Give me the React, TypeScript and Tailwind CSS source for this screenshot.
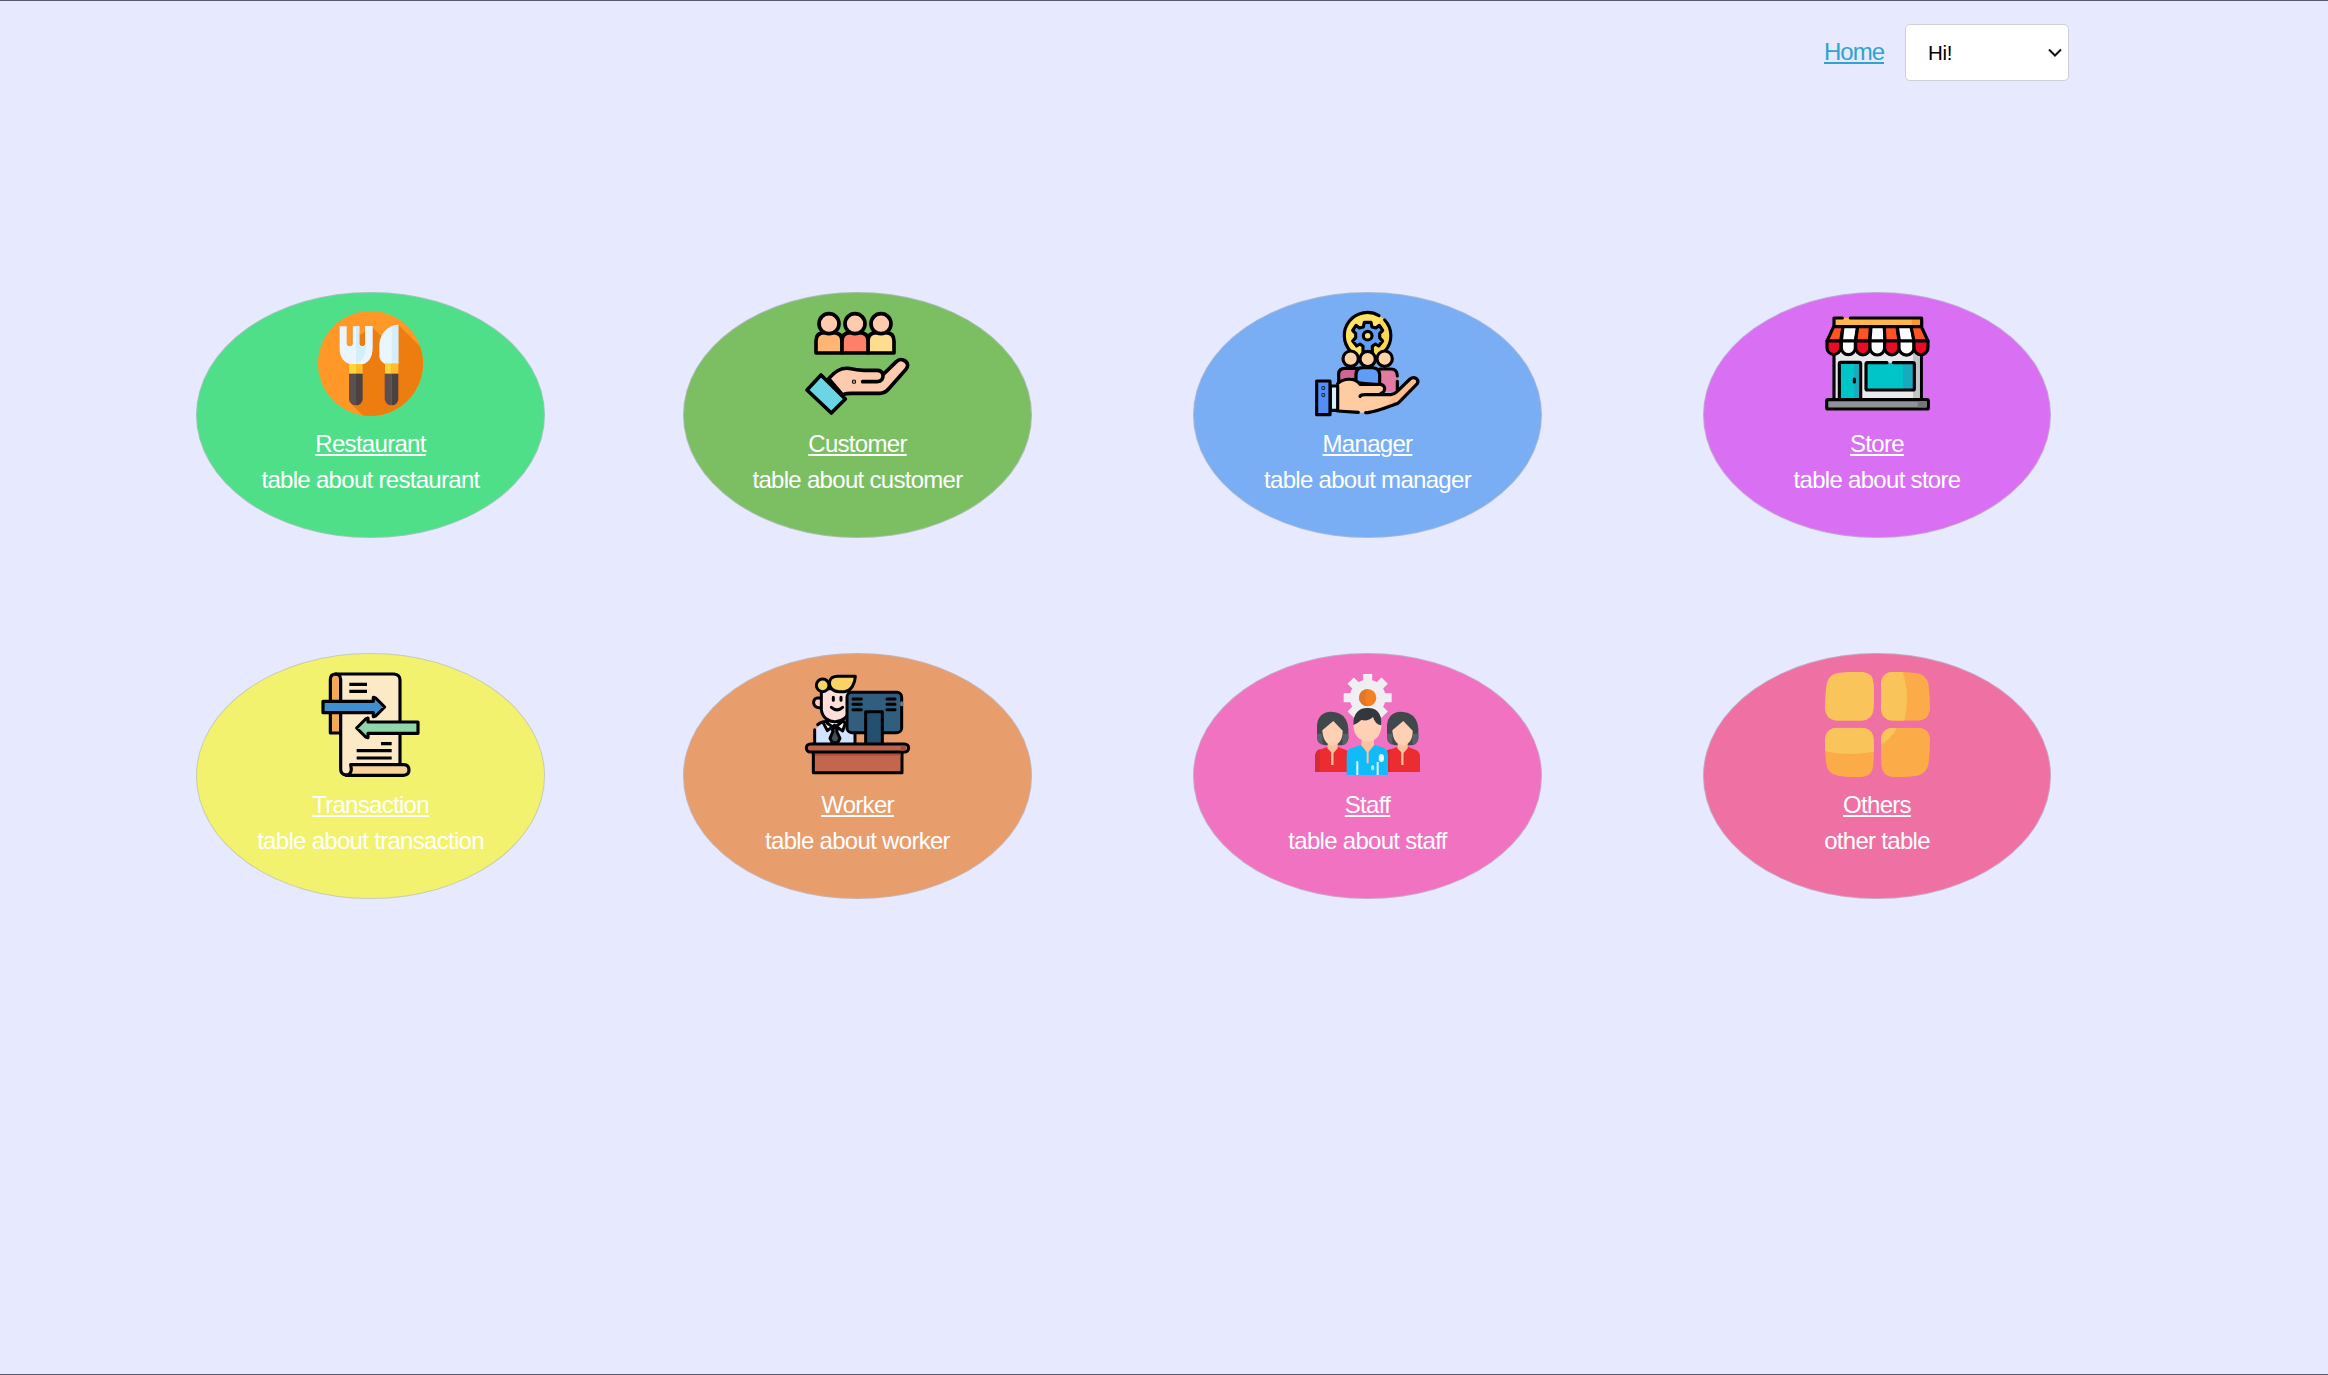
import React from "react";

function RestaurantIcon() {
  return (
    <svg viewBox="384 77 315 315" className="h-[105px] w-[105px]">
      <defs>
        <clipPath id="plate">
          <circle cx="541.5" cy="234.5" r="157.5" />
        </clipPath>
      </defs>
      <circle cx="541.5" cy="234.5" r="157.5" fill="#ff9827" />
      <g clipPath="url(#plate)">
        <path d="M486 123 L512 148 L545 124 L582 160 L625 119 L760 250 L700 440 H568 L478 350 L484 240 Z" fill="#ed7d0e" />
      </g>
      <path d="M449 123H470V174A9 9 0 0 0 488 174V123H508V174A9 9 0 0 0 526 174V123H547V190C547 218 532 236 510 237H485C463 234 449 216 449 190Z" fill="#eaf6ff" />
      <path d="M498 123H508V174A9 9 0 0 0 526 174V123H547V190C547 218 532 236 510 237H498Z" fill="#d3effd" />
      <path d="M526 123H547V190C547 218 532 236 510 237H498C518 228 528 210 528 185Z" fill="#e9f6ff" />
      <rect x="477" y="236" width="21" height="29" fill="#ffd33b" />
      <rect x="498" y="236" width="20" height="29" fill="#ffbd2e" />
      <path d="M477 265H498V360A20 20 0 0 1 477 340Z" fill="#5d4f4f" />
      <path d="M498 265H518V340A20 20 0 0 1 498 360Z" fill="#4b4141" />
      <path d="M625 118V236H585C572 228 568 222 568 210V176C570 145 592 120 625 118Z" fill="#eaf6ff" />
      <path d="M605 124Q614 119 625 118V236H605Z" fill="#d3effd" />
      <rect x="585" y="234" width="20" height="31" fill="#ffd33b" />
      <rect x="605" y="234" width="20" height="31" fill="#ffbd2e" />
      <path d="M584 265H605V360A20 20 0 0 1 584 340Z" fill="#5d4f4f" />
      <path d="M605 265H625V340A20 20 0 0 1 605 360Z" fill="#4b4141" />
    </svg>
  );
}

function CustomerIcon() {
  return (
    <svg viewBox="30 33 315 315" className="h-[105px] w-[105px] overflow-visible" stroke="#000" strokeWidth="11" strokeLinejoin="round" strokeLinecap="round">
      <path d="M63 159V123Q63 98 88 98H115Q141 98 141 123V159Z" fill="#ffb573" />
      <path d="M219 159V123Q219 98 244 98H272Q297 98 297 123V159Z" fill="#ffdc8e" />
      <path d="M141 159V123Q141 98 166 98H194Q219 98 219 123V159Z" fill="#ff8068" />
      <circle cx="102" cy="71" r="30" fill="#ffcbaf" />
      <circle cx="180" cy="71" r="30" fill="#ffcbaf" />
      <circle cx="258" cy="71" r="30" fill="#ffcbaf" />
      <path d="M101 236C121 214 137 203 160 205C178 209 190 211 206 211H246Q261 211 264 224L304 185C316 172 336 181 338 195Q338 202 332 209L280 268Q269 280 254 280H170Q154 280 142 284Z" fill="#ffcbaf" />
      <path d="M203 245H246Q266 244 264 222" fill="none" />
      <circle cx="177" cy="245" r="1.500" fill="#000" strokeWidth="10" />
      <path d="M78 225L151 297L109 339L36 270Z" fill="#6bd5e5" />
    </svg>
  );
}

function ManagerIcon() {
  return (
    <svg viewBox="30 33 315 315" className="h-[105px] w-[105px] overflow-visible" stroke="#000" strokeWidth="9.500" strokeLinejoin="round" strokeLinecap="round">
      <circle cx="188" cy="107" r="69" fill="#ffe366" stroke="none" />
      <path d="M239 60Q266 105 240 152Q215 175 188 176Q226 112 224 50Z" fill="#f7cb45" stroke="none" opacity=".5" />
      <path d="M136 153A69 69 0 0 1 222 47M239 60A69 69 0 0 1 240 153" fill="none" />
      <path d="M178 67H198L201 81L213 84L223 76L233 91L224 101V113L233 123L221 138L211 132L202 139V156H174V139L165 132L155 138L143 123L152 113V101L143 91L153 76L163 84L175 81Z" fill="#5f9df7" />
      <circle cx="188" cy="107" r="13" fill="#ffe366" />
      <path d="M101 245V221Q102 205 120 205H161V255L145 238Z" fill="#cd6695" />
      <path d="M224 274V205H257Q277 206 277 222V274Z" fill="#e27aa1" stroke="none" />
      <path d="M224 207H257Q277 207 277 228M277 244V270" fill="none" />
      <path d="M153 248V223Q154 203 174 203H202Q223 204 224 224V255Z" fill="#5f9df7" />
      <circle cx="137" cy="176" r="23" fill="#ffd3a8" />
      <circle cx="239" cy="176" r="23" fill="#ffd3a8" />
      <circle cx="188" cy="177" r="23" fill="#ffd3a8" />
      <path d="M98 251C118 232 151 234 165 253H225Q239 253 240 268L238 278H270L313 238C325 227 342 236 339 249L287 302Q280 311 267 315L188 339L98 333Z" fill="#ffcba0" stroke="none" />
      <path d="M238 290L270 278L313 238C325 227 342 236 339 249L287 302Q280 311 267 315L240 323L262 292Z" fill="#ffbd8b" stroke="none" />
      <path d="M98 251C118 232 151 234 165 253H225C243 255 243 275 228 280M165 289Q168 284 180 284H257Q269 282 276 275L315 237C327 227 344 237 337 251L287 302Q280 311 267 314Q205 337 182 338M160 337L98 333" fill="none" />
      <rect x="76" y="258" width="22" height="73" fill="#d5f3ff" />
      <rect x="35" y="243" width="40" height="101" fill="#518ef8" />
      <circle cx="55" cy="264" r="1" fill="#000" />
      <circle cx="55" cy="285" r="1" fill="#000" />
    </svg>
  );
}

const AWNING = [
  { top: "M56 80H84L77 123H36Z", bottom: "M36 123H77V143A20 20 0 0 1 36 143Z", hot: true },
  { top: "M84 80H128L121 123H79Z", bottom: "M79 123H121V143A21 21 0 0 1 79 143Z", hot: false },
  { top: "M128 80H166L164 123H122Z", bottom: "M122 123H165V143A21 21 0 0 1 122 143Z", hot: true },
  { top: "M168 80H208L210 123H165Z", bottom: "M165 123H209V143A22 22 0 0 1 165 143Z", hot: false },
  { top: "M208 80H246L252 123H210Z", bottom: "M209 123H252V143A21 21 0 0 1 209 143Z", hot: true },
  { top: "M247 80H290L297 123H253Z", bottom: "M252 123H297V143A22 22 0 0 1 252 143Z", hot: false },
  { top: "M288 80H319L339 123H297Z", bottom: "M297 123H339V143A21 21 0 0 1 297 143Z", hot: true },
];

function StoreIcon() {
  return (
    <svg viewBox="30 33 315 315" className="h-[105px] w-[105px] overflow-visible" stroke="#000" strokeWidth="9.500" strokeLinejoin="round" strokeLinecap="round">
      <path d="M57 145H319V299H57Z" fill="#e9e9ed" />
      <path d="M294 150H314V295H294Z" fill="#c5c3ca" stroke="none" />
      <path d="M56 54H320V80H56Z" fill="#ffb64c" stroke="none" />
      <path d="M290 54H320V80H290Z" fill="#ff982e" stroke="none" />
      <path d="M82 54H57V80H320V54H106" fill="none" />
      {AWNING.map((a) => (
        <g key={a.top}>
          <path d={a.top} fill={a.hot ? "#ff5321" : "#fff"} />
          <path d={a.bottom} fill={a.hot ? "#e90c24" : "#fff"} />
        </g>
      ))}
      <rect x="73" y="187" width="64" height="112" rx="4" fill="#00c5c8" />
      <path d="M118 192H132V294H118Z" fill="#16abc0" stroke="none" />
      <path d="M118 237V246" />
      <rect x="153" y="188" width="145" height="82" rx="4" fill="#00c5c8" stroke="none" />
      <path d="M264 188H296V268H264Z" fill="#16abc0" stroke="none" />
      <path d="M216 188H157Q153 188 153 193V266Q153 270 157 270H294Q298 270 298 266V193Q298 188 294 188H235" fill="none" />
      <rect x="35" y="299" width="305" height="28" rx="4" fill="#929197" />
      <path d="M308 304H335V322H308Z" fill="#77747e" stroke="none" />
    </svg>
  );
}

function TransactionIcon() {
  return (
    <svg viewBox="30 30 315 315" className="h-[105px] w-[105px] overflow-visible" stroke="#000" strokeWidth="9.500" strokeLinejoin="round">
      <path d="M67 213V51Q68 36 83 36Q99 37 99 52V213Z" fill="#f4a955" />
      <path d="M83 36H258Q276 37 276 55V310L130 339H115Q98 338 98 322V52Q97 37 83 36Z" fill="#fce9c5" />
      <path d="M128 308H288Q303 309 303 324Q303 339 286 340H114Q129 338 130 322Z" fill="#f8d49b" />
      <path d="M45 118H196V106L203 108L230 135L203 162L196 164V152H45Z" fill="#3f8fcf" />
      <path d="M330 180H180V168L173 171L146 198L173 225L180 227V214H330Z" fill="#91d5ab" />
      <path d="M124 67H177M124 88H177M219 245H251M146 266H251M146 288H251" fill="none" />
    </svg>
  );
}

function WorkerIcon() {
  return (
    <svg viewBox="30 30 315 315" className="h-[105px] w-[105px] overflow-visible" stroke="#000" strokeWidth="9" strokeLinejoin="round" strokeLinecap="round">
      <path d="M60 243V205L82 180L151 184Q180 193 180 213V243Z" fill="#d1e3ff" stroke="none" />
      <path d="M59 242V203M68 188Q77 179 90 179M180 242V215" fill="none" />
      <path d="M97 173V184L118 200L140 180V168Z" fill="#ffcdc5" stroke="none" />
      <path d="M93 178L84 181L97 206L118 190L143 207L151 184L142 175M97 172V184L118 198L140 180" fill="#f2f6ff" />
      <path d="M109 197H129L125 208L135 229L128 242H112L105 229L114 208Z" fill="#44505c" />
      <path d="M77 108H67C50 110 52 139 75 137" fill="#ffcdc5" />
      <path d="M79 80H162V142C158 190 84 193 79 142Z" fill="#ffdfda" />
      <circle cx="83" cy="70" r="19" fill="#f9d366" />
      <path d="M181 43H130C98 42 99 70 112 82Q118 89 133 89H149C169 86 180 65 181 43Z" fill="#f9d366" />
      <path d="M115 106V115M138 106V115M109 136Q126 151 143 136" fill="none" />
      <rect x="156" y="91" width="164" height="121" rx="14" fill="#315d7e" />
      <path d="M174 111H199M174 127H199M174 143H199M276 111H300M276 127H300M276 143H300" fill="none" />
      <path d="M320 122V128" stroke="#637b91" />
      <path d="M212 243V149H262V243" fill="#234f70" />
      <rect x="55" y="266" width="266" height="66" fill="#c3664e" />
      <path d="M60 273H316V281H60Z" fill="#ac533e" stroke="none" />
      <rect x="34" y="246" width="307" height="24" rx="12" fill="#bd654c" />
      <path d="M317 251H328Q339 258 328 266H317Z" fill="#9a503c" stroke="none" />
    </svg>
  );
}

function SideWoman({ x }: { x: number }) {
  return (
    <g transform={`translate(${x} 0)`}>
      <path d="M36 190Q39 151 78 149Q126 151 130 200V230Q126 249 105 250H61Q37 246 36 222Z" fill="#40484b" />
      <path d="M36 215H52V248Q36 246 36 222ZM112 215H130V230Q126 247 112 249Z" fill="#54606a" />
      <path d="M30 330V283Q32 262 52 260L69 254H99L112 260Q134 264 135 283V330Z" fill="#eb2d32" />
      <path d="M30 330V283Q32 265 44 262V330Z" fill="#d22b32" />
      <path d="M69 240H98V259L83 275L67 259Z" fill="#fbc2a0" />
      <path d="M52 205L85 177L113 206Q113 245 83 251Q54 246 52 205Z" fill="#ffd0b3" />
      <path d="M82 268V309" stroke="#fbc2a0" strokeWidth="7" />
    </g>
  );
}

function StaffIcon() {
  return (
    <svg viewBox="30 30 315 315" className="h-[105px] w-[105px]">
      <circle cx="188" cy="107" r="54" fill="#efeff3" />
      <g stroke="#efeff3" strokeWidth="27">
        <path d="M188 36V170M116 107H260M137 56L239 158M239 56L137 158" />
      </g>
      <circle cx="188" cy="107" r="26" fill="#f58022" />
      <path d="M188 81A26 26 0 0 0 188 133Q173 107 188 81Z" fill="#e4762a" />
      <SideWoman x={0} />
      <SideWoman x={210} />
      <path d="M125 339V278Q126 260 146 256L168 249H207L232 256Q249 261 249 280V339Z" fill="#10bbfa" />
      <path d="M170 226H207V250L188 274L169 250Z" fill="#fbc2a0" />
      <path d="M145 190Q145 142 188 138Q228 142 230 185Q229 235 188 239Q147 234 145 190Z" fill="#ffd0b3" />
      <path d="M145 189C144 147 169 136 190 138C226 138 231 171 229 190Q210 187 204 165Q190 179 169 174Q157 185 145 189Z" fill="#32383c" />
      <path d="M188 264V304" stroke="#fbc2a0" strokeWidth="6" />
      <path d="M157 298V339M218 300V339" stroke="#e4f8ff" strokeWidth="6" />
      <ellipse cx="229" cy="288" rx="8" ry="12" fill="#e9faff" />
      <ellipse cx="203" cy="317" rx="5" ry="8" fill="#a8e7fc" />
    </svg>
  );
}

function OthersIcon() {
  return (
    <svg viewBox="390 81 315 315" className="h-[105px] w-[105px]">
      <defs>
        <clipPath id="tile-tr">
          <path d="M558 118Q559 83 592 81Q622 80 657 83Q696 86 701 121Q705 156 705 190Q703 225 670 227H593Q560 225 558 192Z" />
        </clipPath>
        <clipPath id="tile-bl">
          <path d="M390 284Q392 250 426 248H500Q534 250 536 284Q538 320 535 360Q533 393 500 396Q463 397 430 392Q397 388 393 354Q390 320 390 284Z" />
        </clipPath>
        <clipPath id="tile-br">
          <path d="M558 284Q560 250 594 248H670Q704 250 705 284Q705 320 701 354Q696 388 661 393Q628 397 593 396Q562 393 559 360Z" />
        </clipPath>
      </defs>
      <path d="M390 190Q390 156 394 122Q399 86 434 83Q468 80 504 81Q535 84 536 117Q538 154 536 192Q533 225 500 227H426Q392 225 390 190Z" fill="#f9c45a" />
      <g clipPath="url(#tile-tr)">
        <rect x="550" y="75" width="160" height="160" fill="#fbab48" />
        <ellipse cx="535" cy="162" rx="101" ry="165" fill="#f9c45a" />
      </g>
      <g clipPath="url(#tile-bl)">
        <rect x="385" y="240" width="160" height="160" fill="#fbab48" />
        <ellipse cx="466" cy="236" rx="175" ry="91" fill="#f9c45a" />
      </g>
      <g clipPath="url(#tile-br)">
        <rect x="550" y="240" width="160" height="160" fill="#fbab48" />
        <circle cx="510" cy="205" r="105" fill="#f9c45a" />
      </g>
    </svg>
  );
}

const CARDS = [
  { title: "Restaurant", text: "table about restaurant", color: "bg-[#4fdf89]", Icon: RestaurantIcon },
  { title: "Customer", text: "table about customer", color: "bg-[#7bbf62]", Icon: CustomerIcon },
  { title: "Manager", text: "table about manager", color: "bg-[#79adf4]", Icon: ManagerIcon },
  { title: "Store", text: "table about store", color: "bg-[#d970f4]", Icon: StoreIcon },
  { title: "Transaction", text: "table about transaction", color: "bg-[#f2f26f]", Icon: TransactionIcon },
  { title: "Worker", text: "table about worker", color: "bg-[#e89d6c]", Icon: WorkerIcon },
  { title: "Staff", text: "table about staff", color: "bg-[#f072c1]", Icon: StaffIcon },
  { title: "Others", text: "other table", color: "bg-[#ef70a3]", Icon: OthersIcon },
];

export default function App() {
  return (
    <div className="flex h-[1375px] w-[2328px] flex-col border-y border-y-[#5b5b6b] bg-[#e7e9ff] font-['Liberation_Sans',Arial,sans-serif] text-[24px] leading-9 tracking-[-0.7px]">
      <header className="flex h-[102px] items-center justify-end gap-[21px] pr-[259px]">
        <a href="#" className="tracking-[-1px] text-[#2fa4cf] underline decoration-2 underline-offset-[2px]">Home</a>
        <button className="flex h-[57px] w-[164px] items-center justify-between rounded-[5px] border border-[#cfcfd6] bg-white pt-px pr-[6px] pl-[22px] text-[20.5px] tracking-[-0.3px] text-black">
          <span>Hi!</span>
          <svg viewBox="0 0 14 10" className="h-[10px] w-[14px]" fill="none" stroke="#111" strokeWidth="2">
            <path d="M1 1.500L7 7.500L13 1.500" />
          </svg>
        </button>
      </header>
      <main className="mt-[189px] grid grid-cols-[487px_510px_510px_348px] gap-y-[115px] pl-[196px]">
        {CARDS.map(({ title, text, color, Icon }, i) => (
          <section key={title} className={`flex h-[246px] flex-col items-center rounded-[50%] border border-[#b9bccb]/70 pt-[18px] text-white ${i % 4 === 3 ? "w-[348px]" : "w-[349px]"} ${color}`}>
            <Icon />
            <a href="#" className="mt-[10px] underline decoration-2 underline-offset-[2px]">{title}</a>
            <p>{text}</p>
          </section>
        ))}
      </main>
    </div>
  );
}
